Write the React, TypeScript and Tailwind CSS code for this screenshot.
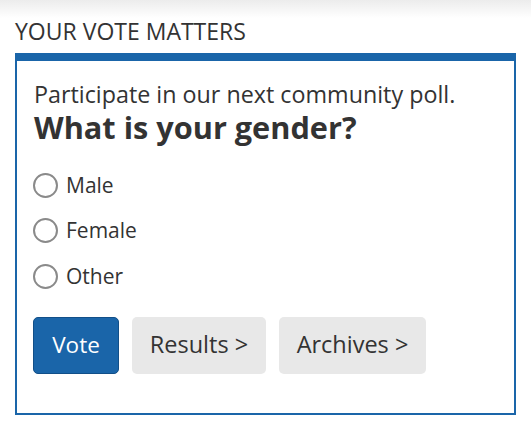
import React from "react";

export default function App() {
  const options = ["Male", "Female", "Other"];
  return (
    <div
      className="w-[531px] h-[433px] bg-gradient-to-b from-[#ececec] to-white to-[18px] text-[#333]"
      style={{ fontFamily: '"Open Sans", sans-serif' }}
    >
      <div className="pl-[15px] pr-[15px] pt-[17px]">
        <h2 className="text-[23px] leading-[28px] font-normal text-[#333]">YOUR VOTE MATTERS</h2>
        <div className="mt-[8px] w-[501px] h-[362px] border-[#1a65a9] border-t-[8px] border-x-2 border-b-2 pl-[17px] pt-[18px]">
          <p className="text-[23.3px] leading-[30px]">Participate in our next community poll.</p>
          <p className="text-[30.7px] leading-[36px] font-bold">What is your gender?</p>
          <div className="mt-[27.5px] flex flex-col gap-[20.5px]">
            {options.map((o) => (
              <label key={o} className="flex items-center gap-[8px] text-[21px] leading-[25px] -ml-[1px]">
                <span className="w-[25px] h-[25px] rounded-full border-2 border-[#8a8a8a] bg-white shrink-0" />
                <span>{o}</span>
              </label>
            ))}
          </div>
          <div className="mt-[28px] flex gap-[13px] -ml-[1px]">
            <button className="w-[86px] h-[57px] rounded-[5px] bg-[#1a65a9] border border-[#124f88] text-white text-[22.5px]">Vote</button>
            <button className="w-[134px] h-[57px] rounded-[5px] bg-[#e8e8e8] text-[#333] text-[23.5px]">Results &gt;</button>
            <button className="w-[147px] h-[57px] rounded-[5px] bg-[#e8e8e8] text-[#333] text-[23.5px]">Archives &gt;</button>
          </div>
        </div>
      </div>
    </div>
  );
}
